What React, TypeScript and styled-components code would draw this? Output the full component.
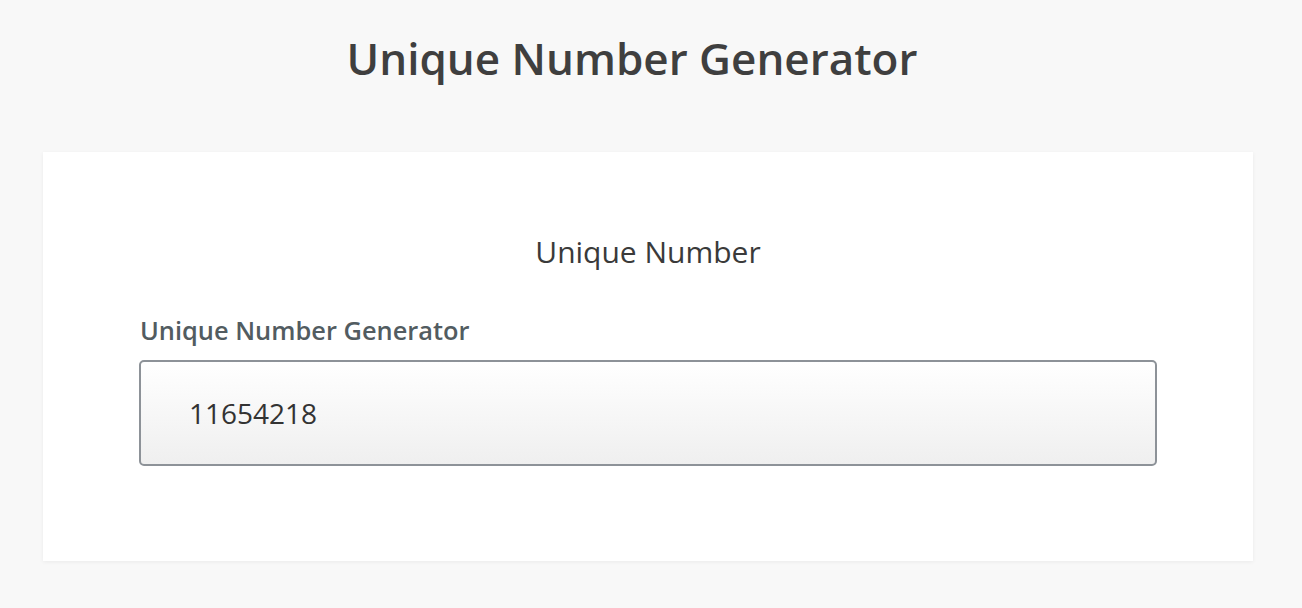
import React from "react";
import styled, { createGlobalStyle } from "styled-components";

const Global = createGlobalStyle`
  html, body { margin: 0; padding: 0; background: #f8f8f8; }
  body { font-family: "Open Sans", "Liberation Sans", sans-serif; }
`;

const Page = styled.div`
  width: 1302px;
  min-height: 608px;
  box-sizing: border-box;
  padding: 0 49px 0 43px;
  display: flex;
  flex-direction: column;
`;

const Title = styled.h1`
  margin: 0;
  padding: 28px 32px 0 0;
  height: 152px;
  box-sizing: border-box;
  text-align: center;
  font-size: 44px;
  font-weight: 600;
  color: #3f3f3f;
`;

const Card = styled.section`
  background: #ffffff;
  height: 409px;
  box-sizing: border-box;
  padding: 80px 96px 0 96px;
  box-shadow: 0 1px 4px rgba(0, 0, 0, 0.06);
  display: flex;
  flex-direction: column;
`;

const Subtitle = styled.h2`
  margin: 0 0 42px 0;
  text-align: center;
  font-size: 30px;
  font-weight: 400;
  color: #3a3a3a;
  line-height: 40px;
`;

const Label = styled.label`
  display: block;
  margin: 0 0 13px 1px;
  font-size: 25.4px;
  font-weight: 600;
  color: #525c61;
  line-height: 33px;
`;

const Field = styled.div`
  height: 106px;
  box-sizing: border-box;
  border: 2px solid #8d9298;
  border-radius: 5px;
  background: linear-gradient(#ffffff, #efefef);
  display: flex;
  align-items: center;
  padding: 0 0 0 48px;
  font-size: 28px;
  color: #333333;
`;

export default function App() {
  return (
    <>
      <Global />
      <Page>
        <Title>Unique Number Generator</Title>
        <Card>
          <Subtitle>Unique Number</Subtitle>
          <Label>Unique Number Generator</Label>
          <Field>11654218</Field>
        </Card>
      </Page>
    </>
  );
}
